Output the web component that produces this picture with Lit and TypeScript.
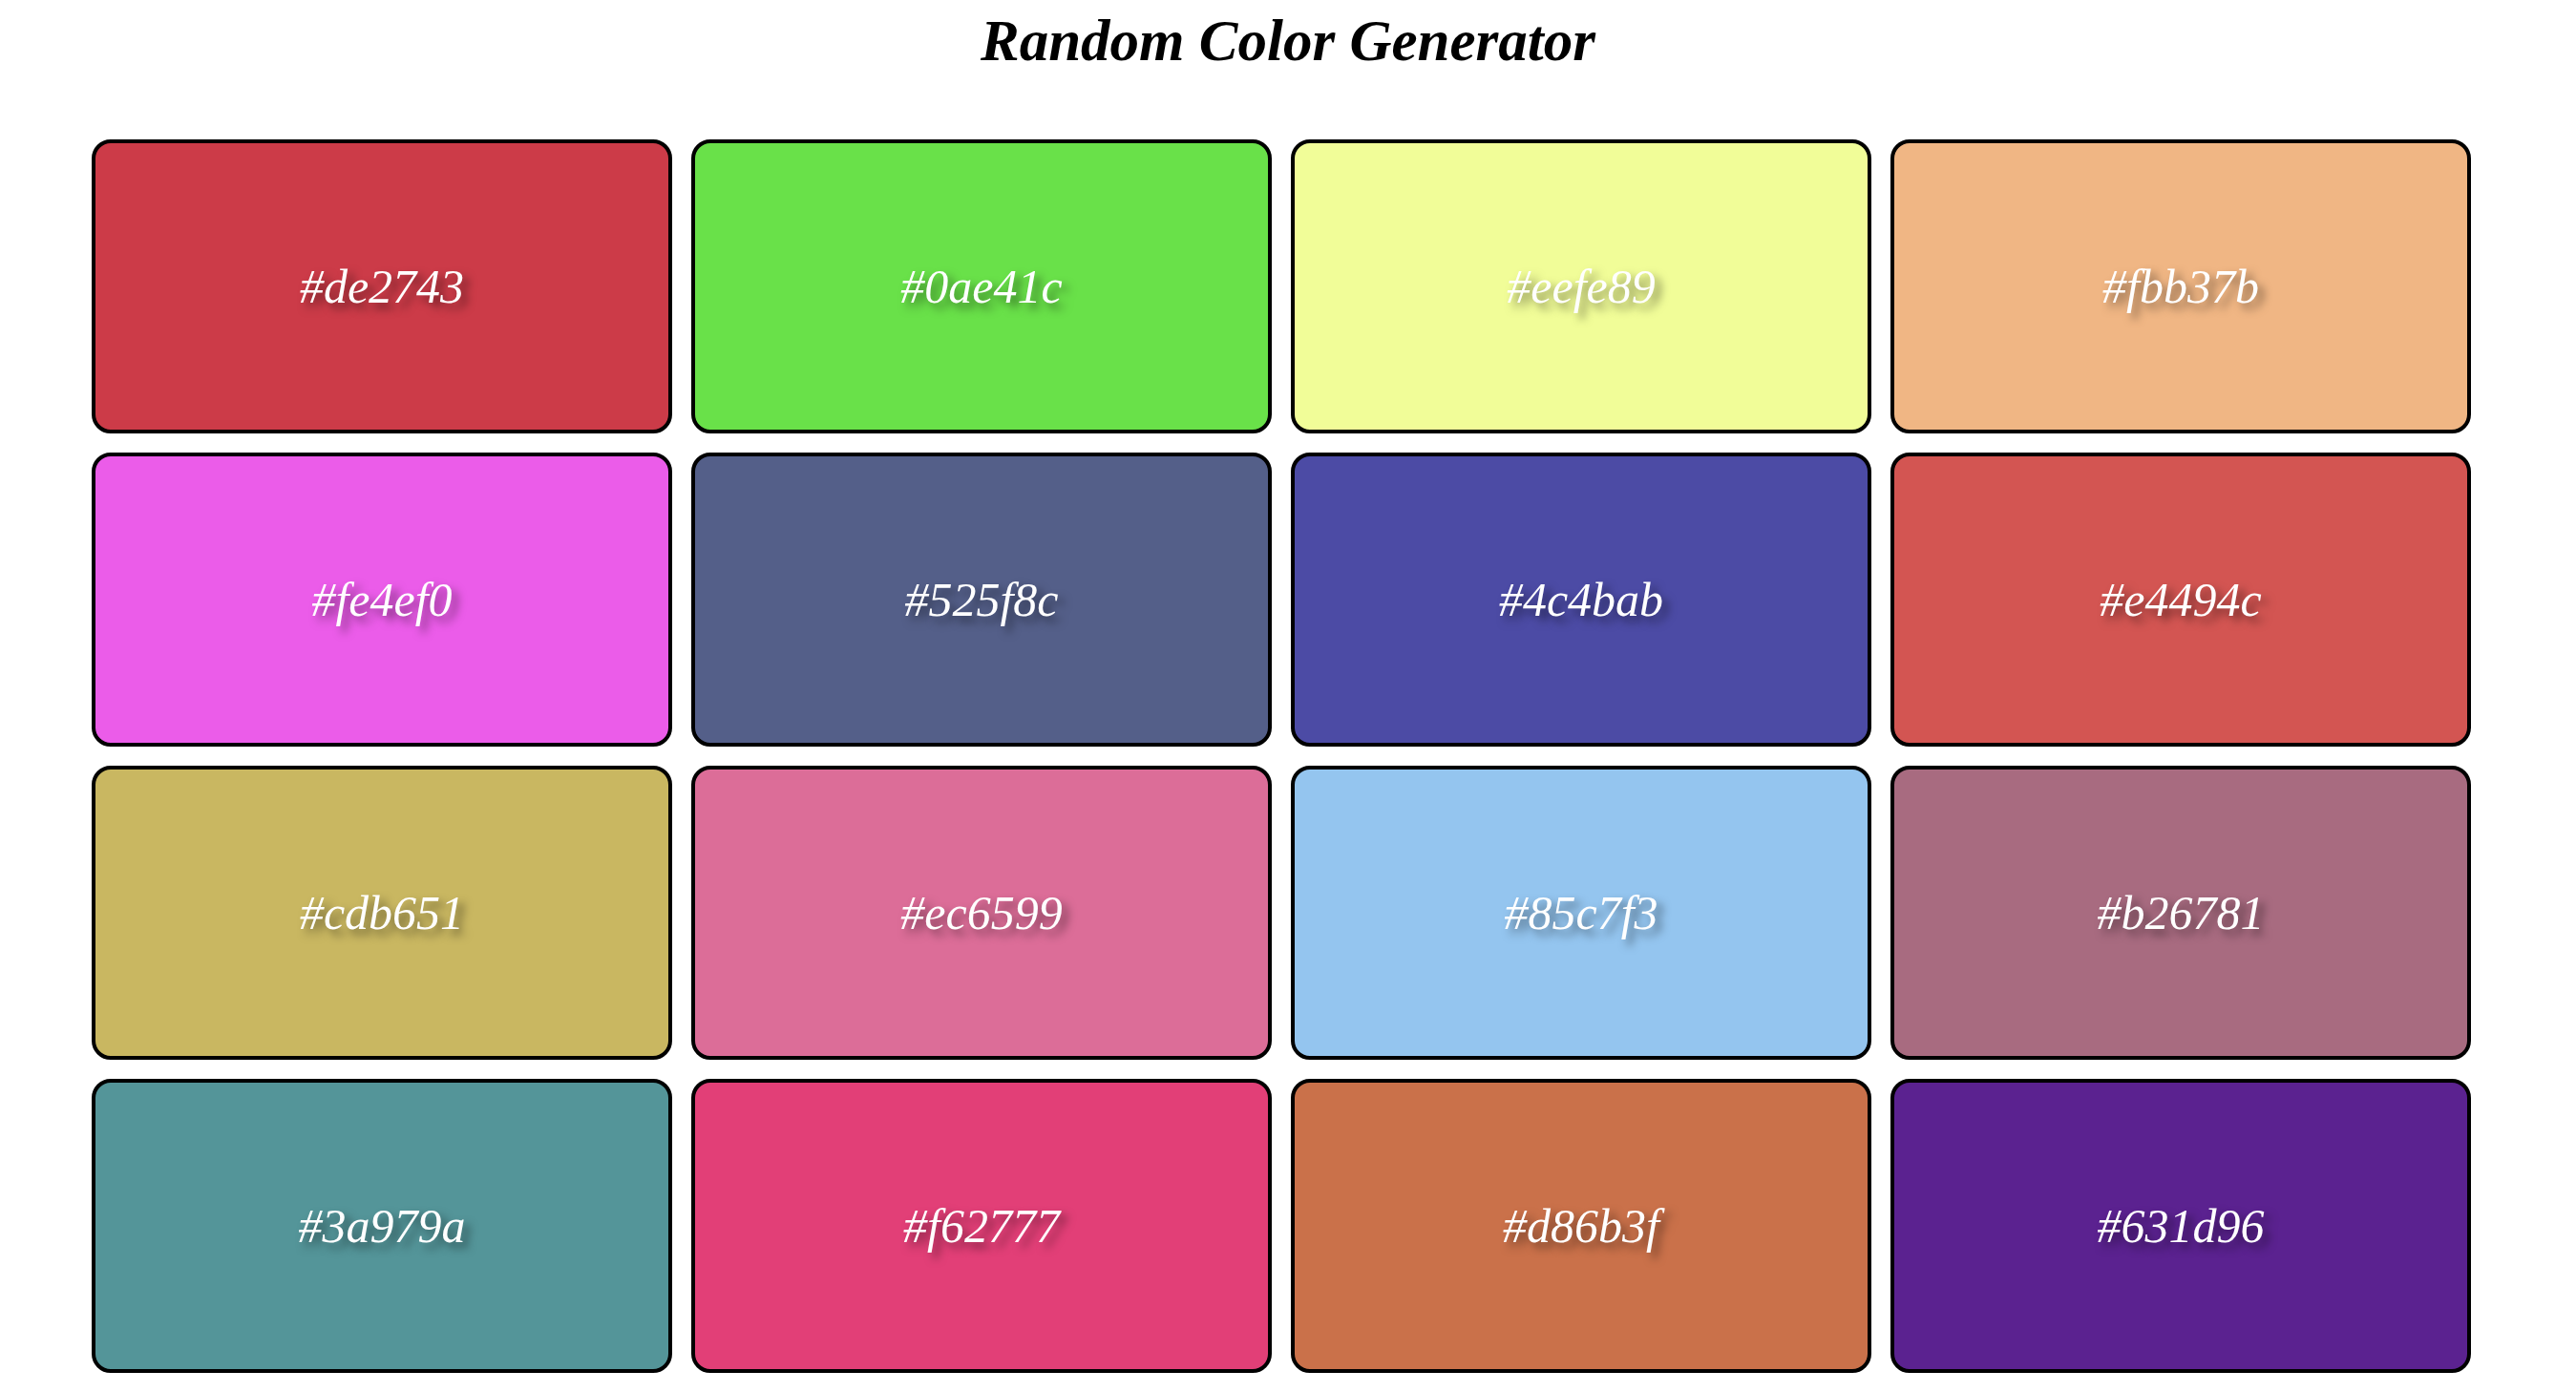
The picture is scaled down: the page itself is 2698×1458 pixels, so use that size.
import { LitElement, html, css } from "lit";
import { customElement, property } from "lit/decorators.js";
import { styleMap } from "lit/directives/style-map.js";

const COLORS = [
  "#de2743", "#0ae41c", "#eefe89", "#fbb37b",
  "#fe4ef0", "#525f8c", "#4c4bab", "#e4494c",
  "#cdb651", "#ec6599", "#85c7f3", "#b26781",
  "#3a979a", "#f62777", "#d86b3f", "#631d96",
];

const decode = (v: number) => (v <= 0.04045 ? v / 12.92 : ((v + 0.055) / 1.055) ** 2.4);
const encode = (v: number) => (v <= 0.0031308 ? v * 12.92 : 1.055 * v ** (1 / 2.4) - 0.055);

/** Maps an sRGB hex color to its channel values on a wide-gamut (P3) display. */
function toDisplay(hex: string): string {
  const [r, g, b] = [1, 3, 5].map((i) => decode(parseInt(hex.slice(i, i + 2), 16) / 255));
  const mapped = [
    0.8225 * r + 0.1775 * g,
    0.0332 * r + 0.9668 * g,
    0.0171 * r + 0.0724 * g + 0.9105 * b,
  ];
  return `rgb(${mapped.map((v) => Math.round(encode(v) * 255)).join(", ")})`;
}

@customElement("color-card")
export class ColorCard extends LitElement {
  @property() color = "#000000";

  static styles = css`
    :host {
      display: block;
    }
    .card {
      box-sizing: border-box;
      display: flex;
      align-items: center;
      justify-content: center;
      min-height: 308px;
      border: 4px solid #000;
      border-radius: 20px;
      color: #fff;
      font-size: 50px;
      line-height: 60px;
      text-shadow: 6px 6px 10px rgba(0, 0, 0, 0.5);
    }
  `;

  render() {
    return html`<div class="card" style=${styleMap({ backgroundColor: toDisplay(this.color) })}>${this.color}</div>`;
  }
}

@customElement("app-root")
export class AppRoot extends LitElement {
  static styles = css`
    :host {
      display: block;
      background: #fff;
      color: #000;
      font-family: "Apple Chancery", "Z003", "URW Chancery L", "Liberation Serif", serif;
      font-style: italic;
    }
    .title {
      margin: 0 0 60px;
      font-size: 61px;
      font-weight: 700;
      line-height: 86px;
      text-align: center;
    }
    .grid {
      display: grid;
      grid-template-columns: repeat(4, 1fr);
      gap: 20px;
      padding: 0 110px 20px 96px;
    }
  `;

  render() {
    return html`
      <main>
        <h1 class="title">Random Color Generator</h1>
        <div class="grid">
          ${COLORS.map((color) => html`<color-card .color=${color}></color-card>`)}
        </div>
      </main>
    `;
  }
}
